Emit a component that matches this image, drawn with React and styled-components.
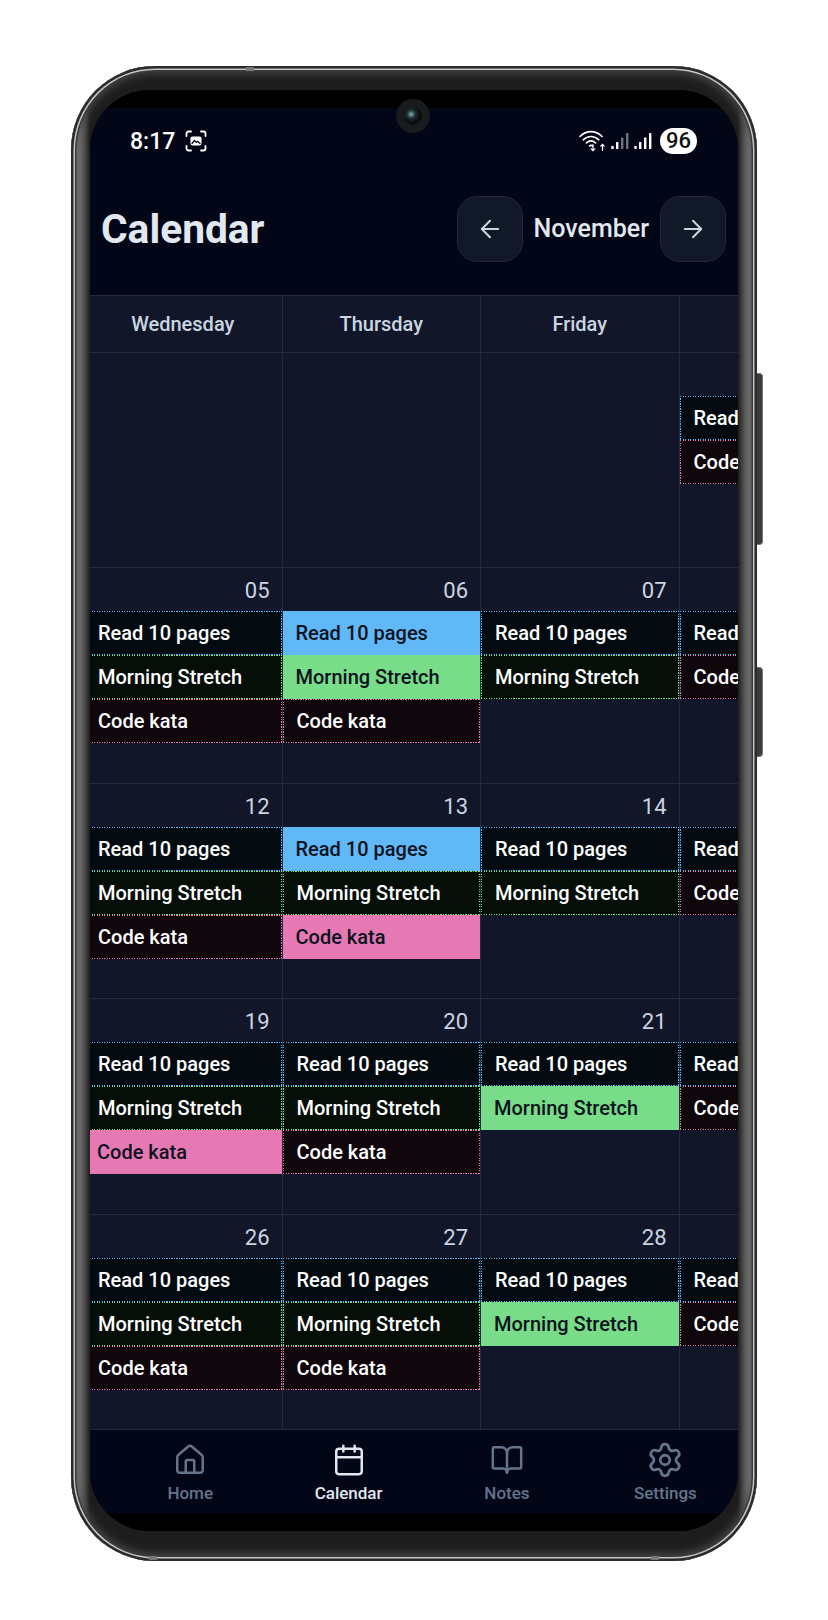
import React from "react";
import styled, { createGlobalStyle, css } from "styled-components";
import { ArrowLeft, ArrowRight, BookOpen, Calendar, House, Settings } from "lucide-react";

const GlobalStyle = createGlobalStyle`
  html, body {
    margin: 0;
    background: #fff;
    font-family: Roboto, "Noto Sans", sans-serif;
  }
`;

const days = ["Wednesday", "Thursday", "Friday", "Saturday"];

// R = Read 10 pages, M = Morning Stretch, C = Code kata; capital means done (filled)
const weeks = [
  [
    { date: "", events: "" },
    { date: "", events: "" },
    { date: "", events: "" },
    { date: "01", events: "rc" },
  ],
  [
    { date: "05", events: "rmc" },
    { date: "06", events: "RMc" },
    { date: "07", events: "rm" },
    { date: "08", events: "rc" },
  ],
  [
    { date: "12", events: "rmc" },
    { date: "13", events: "RmC" },
    { date: "14", events: "rm" },
    { date: "15", events: "rc" },
  ],
  [
    { date: "19", events: "rmC" },
    { date: "20", events: "rmc" },
    { date: "21", events: "rM" },
    { date: "22", events: "rc" },
  ],
  [
    { date: "26", events: "rmc" },
    { date: "27", events: "rmc" },
    { date: "28", events: "rM" },
    { date: "29", events: "rc" },
  ],
];

const habits = {
  r: { title: "Read 10 pages", color: "#60b8f6", tint: "#030b10" },
  m: { title: "Morning Stretch", color: "#78dc88", tint: "#050e07" },
  c: { title: "Code kata", color: "#e678b3", tint: "#10070c" },
};

const tabs = [
  { label: "Home", Icon: House, size: 34 },
  { label: "Calendar", Icon: Calendar, size: 34, active: true },
  { label: "Notes", Icon: BookOpen, size: 34 },
  { label: "Settings", Icon: Settings, size: 38 },
];

function ScreenshotIcon() {
  return (
    <svg width="22" height="22" viewBox="0 0 22 22" fill="none" stroke="#fff" strokeWidth="1.8" strokeLinecap="round">
      <path d="M1.5 6V3.5a2 2 0 0 1 2-2H6M16 1.5h2.5a2 2 0 0 1 2 2V6M20.5 16v2.5a2 2 0 0 1-2 2H16M6 20.5H3.5a2 2 0 0 1-2-2V16" />
      <rect x="5.5" y="6.5" width="11" height="9" rx="2" fill="#fff" stroke="none" />
      <path d="M7 13.5l2.5-3 2 2 1.2-1.2 2.3 2.2" stroke="#020617" strokeWidth="1.2" />
    </svg>
  );
}

function WifiIcon() {
  return (
    <svg width="27" height="24" viewBox="0 0 27 24" fill="none" stroke="#fff" strokeWidth="1.6" strokeLinecap="round">
      <path d="M1 7.5C7.5 1 16.5 1 23 7.5" />
      <path d="M4.2 10.8c4.6-4.4 11-4.4 15.6 0" />
      <path d="M7.4 14c2.8-2.6 6.4-2.6 9.2 0" />
      <path d="M10.5 17c1-.9 2-.9 3 0" />
      <path d="M14 15.5v6M12.2 19.8l1.8 1.9 1.8-1.9" strokeWidth="1.2" />
      <path d="M23.5 21.5v-6M21.8 17.2l1.7-1.9 1.7 1.9" strokeWidth="1.2" />
    </svg>
  );
}

function SignalIcon({ muted }) {
  const dim = muted ? "#6b7280" : "#fff";
  return (
    <svg width="18" height="18" viewBox="0 0 18 18" fill="#fff">
      <rect x="0.3" y="14" width="2.4" height="3" rx="0.5" />
      <rect x="5" y="10" width="2.4" height="7" rx="0.5" />
      <rect x="10" y="5.5" width="2.4" height="11.5" rx="0.5" fill={dim} />
      <rect x="15" y="1" width="2.4" height="16" rx="0.5" fill={dim} />
    </svg>
  );
}

function EventItem({ code }) {
  const habit = habits[code.toLowerCase()];
  const done = code !== code.toLowerCase();
  return (
    <Event $done={done} $color={habit.color} $tint={habit.tint}>
      {habit.title}
    </Event>
  );
}

export default function App() {
  return (
    <Page>
      <GlobalStyle />
      <Phone>
        <Seam $side="top" $at="175px" />
        <Seam $side="bottom" $at="78px" />
        <Seam $side="bottom" $at="580px" />
        <SideButton $top="307px" $height="172px" />
        <SideButton $top="601px" $height="90px" />
        <Screen>
          <Cutout />
          <Camera>
            <Lens />
          </Camera>
          <AppBody>
            <StatusBar>
              <StatusLeft>
                <Time>8:17</Time>
                <ScreenshotIcon />
              </StatusLeft>
              <StatusRight>
                <WifiIcon />
                <SignalIcon muted />
                <SignalIcon />
                <Battery>96</Battery>
              </StatusRight>
            </StatusBar>
            <Header>
              <Title>Calendar</Title>
              <MonthNav>
                <NavButton>
                  <ArrowLeft size={28} strokeWidth={1.75} />
                </NavButton>
                <Month>November</Month>
                <NavButton>
                  <ArrowRight size={28} strokeWidth={1.75} />
                </NavButton>
              </MonthNav>
            </Header>
            <Board>
              <Columns>
                {days.map((day) => (
                  <DayHead key={day}>{day}</DayHead>
                ))}
              </Columns>
              {weeks.map((week, i) => (
                <Columns key={i}>
                  {week.map((cell, j) => (
                    <Cell key={j}>
                      <DateLabel>{cell.date}</DateLabel>
                      {cell.events.split("").map((code) => (
                        <EventItem key={code} code={code} />
                      ))}
                    </Cell>
                  ))}
                </Columns>
              ))}
            </Board>
            <TabBar>
              {tabs.map(({ label, Icon, size, active }) => (
                <Tab key={label} $active={active}>
                  <TabIcon>
                    <Icon size={size} strokeWidth={1.75} />
                  </TabIcon>
                  <TabLabel>{label}</TabLabel>
                </Tab>
              ))}
            </TabBar>
          </AppBody>
          <Cutout />
        </Screen>
      </Phone>
    </Page>
  );
}

// the screenshot's dots sit on a 2.5px pitch, which no CSS dotted border gives at this size
const dottedEdges = (color) => {
  const across = `repeating-linear-gradient(90deg, ${color} 0 1.25px, transparent 1.25px 2.5px)`;
  const down = `repeating-linear-gradient(180deg, ${color} 0 1.25px, transparent 1.25px 2.5px)`;
  return css`
    background-image: ${across}, ${across}, ${down}, ${down};
    background-repeat: no-repeat;
    background-size: 100% 1px, 100% 1px, 1px 100%, 1px 100%;
    background-position: left top, left bottom, left top, right top;
  `;
};

const Page = styled.div`
  width: 828px;
  height: 1620px;
  padding: 66px 0 0 71px;
  box-sizing: border-box;
  overflow: hidden;
`;
const Phone = styled.div`
  position: relative;
  width: 686px;
  height: 1495px;
  box-sizing: border-box;
  padding: 24px 19px 30px;
  border-radius: 84px;
  background: linear-gradient(90deg, #8f8f8f 0, #9a9a9a 5px, #1d1d1d 19px, #1d1d1d calc(100% - 19px), #9a9a9a calc(100% - 5px), #8f8f8f 100%);
  box-shadow: inset 0 0 0 2.5px #2b2b2b, inset 0 0 0 4px #c4c4c4, inset 0 0 0 5.5px #3a3a3a, inset 0 0 10px 7px #4a4a4a;
`;
const Seam = styled.span`
  position: absolute;
  ${(p) => p.$side}: 1px;
  left: ${(p) => p.$at};
  width: 8px;
  height: 4px;
  background: #777;
`;
const SideButton = styled.span`
  position: absolute;
  top: ${(p) => p.$top};
  right: -6px;
  width: 6px;
  height: ${(p) => p.$height};
  border: 1px solid #777;
  border-left: 0;
  border-radius: 0 4px 4px 0;
  box-sizing: border-box;
  background: #3c3c3c;
`;
const Screen = styled.div`
  position: relative;
  height: 100%;
  display: flex;
  flex-direction: column;
  border-radius: 60px;
  overflow: hidden;
  background: #000;
`;
const Cutout = styled.div`
  flex: 0 0 18px;
  background: #000;
`;
const Camera = styled.div`
  position: absolute;
  top: 9px;
  left: 306px;
  width: 34px;
  height: 34px;
  border-radius: 50%;
  background: #1a1b1e;
  display: flex;
  align-items: center;
  justify-content: center;
`;
const Lens = styled.div`
  width: 18px;
  height: 18px;
  border-radius: 50%;
  background: radial-gradient(circle at 40% 40%, #7fb0b8 0, #1c2c30 28%, #050708 62%, #2a2c2e 100%);
`;
const AppBody = styled.div`
  flex: 1;
  min-height: 0;
  display: flex;
  flex-direction: column;
  background: #020617;
`;
const StatusBar = styled.div`
  flex: 0 0 54px;
  box-sizing: border-box;
  padding: 20px 41px 0 40px;
  display: flex;
  align-items: flex-start;
  justify-content: space-between;
`;
const StatusLeft = styled.div`
  display: flex;
  align-items: center;
  gap: 10px;
  height: 26px;
`;
const Time = styled.span`
  color: #fff;
  font-size: 23px;
  font-weight: 500;
`;
const StatusRight = styled.div`
  display: flex;
  align-items: center;
  gap: 5px;
  height: 26px;
`;
const Battery = styled.span`
  width: 37px;
  height: 26px;
  margin-left: 3px;
  border-radius: 13px;
  background: #fff;
  color: #111;
  font-size: 22px;
  font-weight: 500;
  line-height: 26px;
  text-align: center;
`;
const Header = styled.header`
  flex: 0 0 133px;
  box-sizing: border-box;
  padding: 0 12px 0 11px;
  display: flex;
  align-items: center;
  justify-content: space-between;
`;
const Title = styled.h1`
  margin: 0;
  color: #e2e8f0;
  font-size: 40.7px;
  font-weight: 700;
`;
const MonthNav = styled.div`
  display: flex;
  align-items: center;
  gap: 11px;
`;
const NavButton = styled.button`
  width: 66px;
  height: 66px;
  padding: 0;
  display: flex;
  align-items: center;
  justify-content: center;
  border: 1px solid #1e293b;
  border-radius: 20px;
  background: #111827;
  color: #cbd5e1;
`;
const Month = styled.span`
  color: #e2e8f0;
  font-size: 25px;
  font-weight: 500;
`;
const Board = styled.section`
  flex: 1;
  min-height: 0;
  margin-left: -6px;
  overflow: hidden;
  background: #111729;
  border-top: 1px solid #222c3f;
`;
const Columns = styled.div`
  display: grid;
  grid-template-columns: repeat(4, 198.5px);
  border-bottom: 1px solid #222c3f;
`;
const DayHead = styled.div`
  height: 56px;
  display: flex;
  align-items: center;
  justify-content: center;
  border-right: 1px solid #222c3f;
  color: #cbd5e1;
  font-size: 20px;
  font-weight: 500;
`;
const Cell = styled.div`
  height: 214.4px;
  border-right: 1px solid #222c3f;
`;
const DateLabel = styled.div`
  height: 43px;
  box-sizing: border-box;
  padding: 10px 12px 0 0;
  color: #cbd5e1;
  font-size: 22px;
  line-height: 26px;
  text-align: right;
`;
const Event = styled.div`
  height: 44px;
  box-sizing: border-box;
  padding-left: ${(p) => (p.$done ? "13px" : "14px")};
  background-color: ${(p) => (p.$done ? p.$color : p.$tint)};
  color: ${(p) => (p.$done ? "#0b1220" : "#fff")};
  font-size: 20px;
  font-weight: 500;
  line-height: 44px;
  white-space: nowrap;
  overflow: hidden;
  ${(p) => !p.$done && dottedEdges(p.$color)}
`;
const TabBar = styled.nav`
  flex: 0 0 83px;
  box-sizing: border-box;
  padding: 13px 0 0 21px;
  display: grid;
  grid-template-columns: repeat(4, 158.4px);
  overflow: hidden;
  background: #020617;
`;
const Tab = styled.div`
  display: flex;
  flex-direction: column;
  align-items: center;
  gap: 6px;
  color: ${(p) => (p.$active ? "#e2e8f0" : "#64748b")};
`;
const TabIcon = styled.div`
  height: 34px;
  display: flex;
  align-items: center;
  justify-content: center;
`;
const TabLabel = styled.span`
  font-size: 17px;
  font-weight: 500;
  line-height: 20px;
`;
